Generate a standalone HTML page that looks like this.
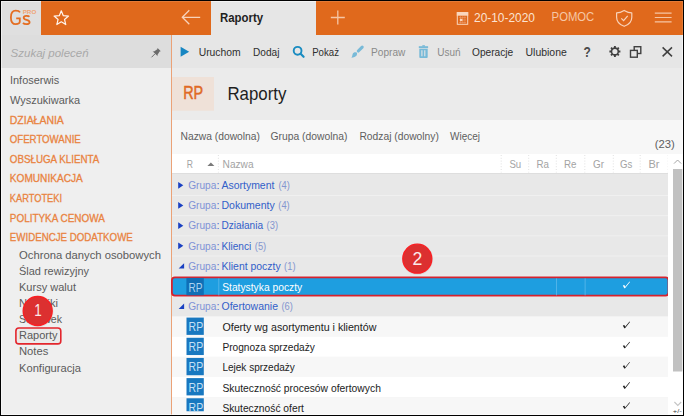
<!DOCTYPE html>
<html><head><meta charset="utf-8"><style>
html,body{margin:0;padding:0;width:684px;height:416px;overflow:hidden;background:#efefef}
svg{display:block}
text{font-family:"Liberation Sans", sans-serif;}
</style></head><body>
<svg width="684" height="416" viewBox="0 0 684 416">
<defs><clipPath id="clipL"><rect x="0" y="0" width="684" height="411.2"/></clipPath></defs>
<rect x="0" y="0" width="684" height="416" fill="#efefef" />
<rect x="0" y="0" width="41" height="35" fill="#dfdfdf" />
<rect x="41" y="0" width="170" height="35" fill="#e0691c" />
<rect x="211" y="0" width="105" height="35" fill="#e6e6e6" />
<rect x="316" y="0" width="368" height="35" fill="#e0691c" />
<path d="M20,12.4 C19.2,11 17.7,10.6 15.7,10.6 C12.7,10.6 10.9,13.1 10.9,17.4 C10.9,21.7 12.7,24.1 15.7,24.1 C17.9,24.1 19.8,23.4 19.8,21.6 L19.8,18.4 L16.2,18.4" fill="none" stroke="#e46e22" stroke-width="1.8"/>
<path d="M29.4,16.7 C28.8,15.8 27.7,15.9 26.3,15.9 C24.6,15.9 23.7,16.6 23.7,17.8 C23.7,20.5 29.6,19.4 29.6,22.3 C29.6,23.6 28.5,24.2 26.4,24.2 C24.9,24.2 23.7,23.8 23,22.9" fill="none" stroke="#e46e22" stroke-width="1.8"/>
<text x="22.7" y="13.5" font-size="5.4" fill="#f0a474" textLength="13.6" lengthAdjust="spacingAndGlyphs" font-weight="700" >PRO</text>
<polygon points="61.30,10.80 63.30,15.65 68.53,16.05 64.53,19.45 65.77,24.55 61.30,21.80 56.83,24.55 58.07,19.45 54.07,16.05 59.30,15.65" fill="none" stroke="#fff5ee" stroke-width="1.2" stroke-linejoin="round"/>
<path d="M182.3,17.3 H200.2 M189.3,10.3 L182.3,17.3 L189.3,24.3" fill="none" stroke="#f8d3ba" stroke-width="1.3"/>
<text x="220" y="22" font-size="12.5" fill="#1e1e1e" textLength="43" lengthAdjust="spacingAndGlyphs" font-weight="700" >Raporty</text>
<path d="M330.8,17.5 H344.8 M337.8,10.5 V24.5" fill="none" stroke="#f5c6a5" stroke-width="1.3"/>
<rect x="457.3" y="12.6" width="10.4" height="11.7" fill="none" stroke="#f9d6bd" stroke-width="1"/>
<rect x="456.8" y="12.1" width="11.4" height="3.6" fill="#f9d6bd" />
<path d="M459,17.5 H466 M459,20 H466 M459,22.5 H466 M460.5,16 V23.5 M462.7,16 V23.5 M464.9,16 V23.5" stroke="#efa276" stroke-width="0.5"/>
<rect x="460" y="18.8" width="2.4" height="2.3" fill="#f9d6bd" />
<text x="474" y="22.4" font-size="12" fill="#fbe3d2" textLength="61" lengthAdjust="spacingAndGlyphs" >20-10-2020</text>
<text x="551.6" y="21.1" font-size="12.3" fill="#f6c7a6" textLength="42.7" lengthAdjust="spacingAndGlyphs" >POMOC</text>
<path d="M624.2,10.4 C621.2,12.2 618.7,12.9 616.6,12.9 L616.6,17.2 C616.6,22 620,24.8 624.2,26.3 C628.4,24.8 631.8,22 631.8,17.2 L631.8,12.9 C629.7,12.9 627.2,12.2 624.2,10.4 Z" fill="none" stroke="#f8d3ba" stroke-width="1.2" stroke-linejoin="round"/>
<path d="M621.3,18.4 L623.6,20.7 L627.7,15.8" fill="none" stroke="#f8d3ba" stroke-width="1.2"/>
<path d="M654.8,13.1 H671.6 M654.8,17.5 H671.6 M654.8,21.9 H671.6" stroke="#f6c5a3" stroke-width="1.2"/>
<rect x="1" y="35" width="170" height="33" fill="#dddddd" />
<text x="10.6" y="57" font-size="11.5" fill="#a9a9a9" textLength="78" lengthAdjust="spacingAndGlyphs" font-style="italic" >Szukaj poleceń</text>
<g fill="#6b6b6b"><path d="M157.6,48 L160.8,51.2 L159.6,51.6 L157.4,54.9 L157.7,56.3 L152.6,51.2 L154,51.5 L157.3,49.3 Z"/><path d="M155,53.8 L151.5,57.3" stroke="#6b6b6b" stroke-width="1"/></g>
<text x="10" y="84.3" font-size="11.2" fill="#5b5b5b" textLength="49.2" lengthAdjust="spacingAndGlyphs" >Infoserwis</text>
<text x="10" y="103.9" font-size="11.2" fill="#5b5b5b" textLength="70" lengthAdjust="spacingAndGlyphs" >Wyszukiwarka</text>
<text x="9.8" y="123.5" font-size="10.6" fill="#e9833f" textLength="54" lengthAdjust="spacingAndGlyphs" stroke="#e9833f" stroke-width="0.3">DZIAŁANIA</text>
<text x="9.8" y="143.1" font-size="10.6" fill="#e9833f" textLength="71" lengthAdjust="spacingAndGlyphs" stroke="#e9833f" stroke-width="0.3">OFERTOWANIE</text>
<text x="9.8" y="162.7" font-size="10.6" fill="#e9833f" textLength="89.5" lengthAdjust="spacingAndGlyphs" stroke="#e9833f" stroke-width="0.3">OBSŁUGA KLIENTA</text>
<text x="9.8" y="182.3" font-size="10.6" fill="#e9833f" textLength="73" lengthAdjust="spacingAndGlyphs" stroke="#e9833f" stroke-width="0.3">KOMUNIKACJA</text>
<text x="9.8" y="201.9" font-size="10.6" fill="#e9833f" textLength="52.3" lengthAdjust="spacingAndGlyphs" stroke="#e9833f" stroke-width="0.3">KARTOTEKI</text>
<text x="9.8" y="221.5" font-size="10.6" fill="#e9833f" textLength="95" lengthAdjust="spacingAndGlyphs" stroke="#e9833f" stroke-width="0.3">POLITYKA CENOWA</text>
<text x="9.8" y="241.1" font-size="10.6" fill="#e9833f" textLength="123" lengthAdjust="spacingAndGlyphs" stroke="#e9833f" stroke-width="0.3">EWIDENCJE DODATKOWE</text>
<text x="19" y="258.8" font-size="11.2" fill="#5b5b5b" textLength="142" lengthAdjust="spacingAndGlyphs" >Ochrona danych osobowych</text>
<text x="19" y="274.9" font-size="11.2" fill="#5b5b5b" textLength="70" lengthAdjust="spacingAndGlyphs" >Ślad rewizyjny</text>
<text x="19" y="291.0" font-size="11.2" fill="#5b5b5b" textLength="57" lengthAdjust="spacingAndGlyphs" >Kursy walut</text>
<text x="19" y="307.1" font-size="11.2" fill="#5b5b5b" textLength="39" lengthAdjust="spacingAndGlyphs" >Naklejki</text>
<text x="19" y="323.2" font-size="11.2" fill="#5b5b5b" textLength="43" lengthAdjust="spacingAndGlyphs" >Schowek</text>
<text x="19" y="339.3" font-size="11.2" fill="#5b5b5b" textLength="38.5" lengthAdjust="spacingAndGlyphs" >Raporty</text>
<text x="19" y="355.4" font-size="11.2" fill="#5b5b5b" textLength="29.3" lengthAdjust="spacingAndGlyphs" >Notes</text>
<text x="19" y="371.5" font-size="11.2" fill="#5b5b5b" textLength="62" lengthAdjust="spacingAndGlyphs" >Konfiguracja</text>
<rect x="171" y="35" width="1" height="381" fill="#eba277" />
<rect x="172" y="35" width="511" height="33" fill="#e6e6e6" />
<path d="M180.6,46.8 L180.6,56.7 L189.2,51.8 Z" fill="#1786c2"/>
<text x="198.7" y="56" font-size="10.9" fill="#2e2e2e" textLength="42" lengthAdjust="spacingAndGlyphs" >Uruchom</text>
<text x="253" y="56" font-size="10.9" fill="#2e2e2e" textLength="26.4" lengthAdjust="spacingAndGlyphs" >Dodaj</text>
<circle cx="297.6" cy="50.8" r="3.9" fill="none" stroke="#1a8cc1" stroke-width="1.9"/>
<path d="M300.6,53.8 L303.6,56.8" stroke="#1a8cc1" stroke-width="2.2" stroke-linecap="round"/>
<text x="312.2" y="56" font-size="10.9" fill="#2e2e2e" textLength="26.8" lengthAdjust="spacingAndGlyphs" >Pokaż</text>
<path d="M362.2,47.1 L358.3,51" stroke="#78bad8" stroke-width="3.1" stroke-linecap="round"/>
<path d="M356.6,52.6 C355.2,51.8 353.2,52.3 352.6,54.2 C352.3,55.5 352,57 351.3,57.8 C353.6,57.6 355.8,56.6 356.6,55.4 C357.2,54.5 357.3,53.2 356.6,52.6 Z" fill="#78bad8"/>
<text x="371.1" y="56" font-size="10.9" fill="#8a8a8a" textLength="34.3" lengthAdjust="spacingAndGlyphs" >Popraw</text>
<g fill="#78bad8"><rect x="418.8" y="46.2" width="9.3" height="1.9"/><rect x="422.3" y="45.2" width="2.6" height="1.4"/><path d="M419.3,48.8 H427.7 V57 Q427.7,57.9 426.8,57.9 H420.2 Q419.3,57.9 419.3,57 Z"/></g>
<path d="M421.9,50.3 V56.3 M424.8,50.3 V56.3" stroke="#e6e6e6" stroke-width="1.1"/>
<text x="437.3" y="56" font-size="10.9" fill="#8a8a8a" textLength="23.3" lengthAdjust="spacingAndGlyphs" >Usuń</text>
<text x="472" y="56" font-size="10.9" fill="#2e2e2e" textLength="41.2" lengthAdjust="spacingAndGlyphs" >Operacje</text>
<text x="525.5" y="56" font-size="10.9" fill="#2e2e2e" textLength="41.3" lengthAdjust="spacingAndGlyphs" >Ulubione</text>
<text x="583.5" y="57.3" font-size="15" fill="#4a4a4a" textLength="7.3" lengthAdjust="spacingAndGlyphs" font-weight="700" >?</text>
<path d="M617.90,51.50 L620.40,51.50 M617.02,53.62 L618.79,55.39 M614.90,54.50 L614.90,57.00 M612.78,53.62 L611.01,55.39 M611.90,51.50 L609.40,51.50 M612.78,49.38 L611.01,47.61 M614.90,48.50 L614.90,46.00 M617.02,49.38 L618.79,47.61" stroke="#404040" stroke-width="1.9"/>
<circle cx="614.9" cy="51.5" r="3.4" fill="#e6e6e6" stroke="#404040" stroke-width="1.6"/>
<rect x="634.2" y="46.7" width="6.6" height="6.8" fill="none" stroke="#404040" stroke-width="1.4"/>
<rect x="630.5" y="50.4" width="6.8" height="6.8" fill="#e6e6e6" stroke="#404040" stroke-width="1.4"/>
<path d="M662.6,47.4 L672,56.4 M672,47.4 L662.6,56.4" stroke="#404040" stroke-width="1.5"/>
<rect x="172" y="68" width="511" height="52" fill="#ebebeb" />
<rect x="172" y="77" width="42" height="33.7" fill="#efe1d8" />
<text x="183.2" y="99.3" font-size="17.8" fill="#e06a24" textLength="20" lengthAdjust="spacingAndGlyphs" stroke="#e06a24" stroke-width="0.5">RP</text>
<text x="227.4" y="99.5" font-size="17.8" fill="#1e1e1e" textLength="59" lengthAdjust="spacingAndGlyphs" >Raporty</text>
<rect x="172" y="120" width="511" height="34" fill="#f7f7f7" />
<text x="180.5" y="140.2" font-size="10.8" fill="#5e5e5e" textLength="79.5" lengthAdjust="spacingAndGlyphs" >Nazwa (dowolna)</text>
<text x="270.5" y="140.2" font-size="10.8" fill="#5e5e5e" textLength="77" lengthAdjust="spacingAndGlyphs" >Grupa (dowolna)</text>
<text x="359.4" y="140.2" font-size="10.8" fill="#5e5e5e" textLength="79.5" lengthAdjust="spacingAndGlyphs" >Rodzaj (dowolny)</text>
<text x="450" y="140.2" font-size="10.8" fill="#5e5e5e" textLength="30" lengthAdjust="spacingAndGlyphs" >Więcej</text>
<text x="654.7" y="147.6" font-size="11.6" fill="#5e5e5e" textLength="20" lengthAdjust="spacingAndGlyphs" >(23)</text>
<rect x="172" y="154" width="511" height="19" fill="#ffffff" />
<rect x="172" y="173" width="496" height="1" fill="#dedede" />
<text x="186.8" y="167.6" font-size="10.6" fill="#a3a3a3" textLength="6.2" lengthAdjust="spacingAndGlyphs" >R</text>
<path d="M207.4,166 L214.4,166 L210.9,162.4 Z" fill="#7a7a7a"/>
<text x="222.6" y="167.6" font-size="10.6" fill="#a3a3a3" textLength="31" lengthAdjust="spacingAndGlyphs" >Nazwa</text>
<text x="509.4" y="167.6" font-size="10.6" fill="#a3a3a3" textLength="11.8" lengthAdjust="spacingAndGlyphs" >Su</text>
<text x="536.4" y="167.6" font-size="10.6" fill="#a3a3a3" textLength="12.5" lengthAdjust="spacingAndGlyphs" >Ra</text>
<text x="564" y="167.6" font-size="10.6" fill="#a3a3a3" textLength="12.5" lengthAdjust="spacingAndGlyphs" >Re</text>
<text x="593" y="167.6" font-size="10.6" fill="#a3a3a3" textLength="11" lengthAdjust="spacingAndGlyphs" >Gr</text>
<text x="620" y="167.6" font-size="10.6" fill="#a3a3a3" textLength="12.3" lengthAdjust="spacingAndGlyphs" >Gs</text>
<text x="648.4" y="167.6" font-size="10.6" fill="#a3a3a3" textLength="11" lengthAdjust="spacingAndGlyphs" >Br</text>
<path d="M218.4,155 V172.5" stroke="#d9d9d9" stroke-width="0.8" stroke-dasharray="1,1.8"/>
<path d="M501.2,155 V172.5" stroke="#d9d9d9" stroke-width="0.8" stroke-dasharray="1,1.8"/>
<path d="M528.7,155 V172.5" stroke="#d9d9d9" stroke-width="0.8" stroke-dasharray="1,1.8"/>
<path d="M556.3,155 V172.5" stroke="#d9d9d9" stroke-width="0.8" stroke-dasharray="1,1.8"/>
<path d="M584.8,155 V172.5" stroke="#d9d9d9" stroke-width="0.8" stroke-dasharray="1,1.8"/>
<path d="M613.3,155 V172.5" stroke="#d9d9d9" stroke-width="0.8" stroke-dasharray="1,1.8"/>
<path d="M640.2,155 V172.5" stroke="#d9d9d9" stroke-width="0.8" stroke-dasharray="1,1.8"/>
<path d="M668.2,155 V172.5" stroke="#d9d9d9" stroke-width="0.8" stroke-dasharray="1,1.8"/>
<rect x="172" y="174" width="496" height="142.49" fill="#e8e8e8" />
<rect x="172" y="194.97" width="496" height="1" fill="rgba(255,255,255,0.35)" />
<rect x="172" y="215.14" width="496" height="1" fill="rgba(255,255,255,0.35)" />
<rect x="172" y="235.31" width="496" height="1" fill="rgba(255,255,255,0.35)" />
<rect x="172" y="255.48" width="496" height="1" fill="rgba(255,255,255,0.35)" />
<rect x="172" y="275.65" width="496" height="1" fill="rgba(255,255,255,0.35)" />
<rect x="172" y="295.82" width="496" height="1" fill="rgba(255,255,255,0.35)" />
<path d="M178.2,181.90 L178.2,188.70 L183.3,185.30 Z" fill="#1a40c2"/>
<text x="188.2" y="189.05" font-size="10.9" fill="#7f92d6" textLength="28.2" lengthAdjust="spacingAndGlyphs" >Grupa</text>
<text x="216.4" y="189.05" font-size="10.9" fill="#4a6ad0">:</text>
<text x="221.5" y="189.05" font-size="10.9" fill="#3260c8" textLength="52.9" lengthAdjust="spacingAndGlyphs" >Asortyment</text>
<text x="278.5" y="189.05" font-size="10.9" fill="#8596cf" textLength="11.4" lengthAdjust="spacingAndGlyphs" >(4)</text>
<path d="M178.2,202.07 L178.2,208.87 L183.3,205.47 Z" fill="#1a40c2"/>
<text x="188.2" y="209.22" font-size="10.9" fill="#7f92d6" textLength="28.2" lengthAdjust="spacingAndGlyphs" >Grupa</text>
<text x="216.4" y="209.22" font-size="10.9" fill="#4a6ad0">:</text>
<text x="221.5" y="209.22" font-size="10.9" fill="#3260c8" textLength="53.3" lengthAdjust="spacingAndGlyphs" >Dokumenty</text>
<text x="278.3" y="209.22" font-size="10.9" fill="#8596cf" textLength="11.4" lengthAdjust="spacingAndGlyphs" >(4)</text>
<path d="M178.2,222.24 L178.2,229.04 L183.3,225.64 Z" fill="#1a40c2"/>
<text x="188.2" y="229.39" font-size="10.9" fill="#7f92d6" textLength="28.2" lengthAdjust="spacingAndGlyphs" >Grupa</text>
<text x="216.4" y="229.39" font-size="10.9" fill="#4a6ad0">:</text>
<text x="221.5" y="229.39" font-size="10.9" fill="#3260c8" textLength="41.5" lengthAdjust="spacingAndGlyphs" >Działania</text>
<text x="266.6" y="229.39" font-size="10.9" fill="#8596cf" textLength="11.4" lengthAdjust="spacingAndGlyphs" >(3)</text>
<path d="M178.2,242.41 L178.2,249.21 L183.3,245.81 Z" fill="#1a40c2"/>
<text x="188.2" y="249.56" font-size="10.9" fill="#7f92d6" textLength="28.2" lengthAdjust="spacingAndGlyphs" >Grupa</text>
<text x="216.4" y="249.56" font-size="10.9" fill="#4a6ad0">:</text>
<text x="221.5" y="249.56" font-size="10.9" fill="#3260c8" textLength="29.8" lengthAdjust="spacingAndGlyphs" >Klienci</text>
<text x="254.8" y="249.56" font-size="10.9" fill="#8596cf" textLength="11.4" lengthAdjust="spacingAndGlyphs" >(5)</text>
<path d="M178.6,268.58 L184.1,268.58 L184.1,263.18 Z" fill="#1a40c2"/>
<text x="188.2" y="269.73" font-size="10.9" fill="#7f92d6" textLength="28.2" lengthAdjust="spacingAndGlyphs" >Grupa</text>
<text x="216.4" y="269.73" font-size="10.9" fill="#4a6ad0">:</text>
<text x="221.5" y="269.73" font-size="10.9" fill="#3260c8" textLength="59.1" lengthAdjust="spacingAndGlyphs" >Klient poczty</text>
<text x="284.1" y="269.73" font-size="10.9" fill="#8596cf" textLength="11.4" lengthAdjust="spacingAndGlyphs" >(1)</text>
<rect x="171.9" y="277.4" width="496.6" height="18.2" rx="3" fill="#1e9ee0" stroke="#d5232e" stroke-width="1.8"/>
<rect x="186.4" y="277.9" width="17.4" height="17.4" fill="#106fb6" />
<text x="188.6" y="291.5" font-size="12.8" fill="#a9d2f0" textLength="14" lengthAdjust="spacingAndGlyphs" >RP</text>
<rect x="218.4" y="278.4" width="0.8" height="17" fill="#5cb8ea"/>
<rect x="556.2" y="278.4" width="0.8" height="17" fill="#5cb8ea"/>
<rect x="584.7" y="278.4" width="0.8" height="17" fill="#5cb8ea"/>
<text x="222.2" y="291.2" font-size="10.9" fill="#ffffff" textLength="80" lengthAdjust="spacingAndGlyphs" >Statystyka poczty</text>
<path d="M622.8000000000001,285.59999999999997 L624.4,285.0 L625.2,286.8 L629.5,281.59999999999997 L630.0,282.0 L625.0,288.2 L624.3000000000001,288.2 Z" fill="#ffffff"/>
<path d="M178.6,308.92 L184.1,308.92 L184.1,303.52 Z" fill="#1a40c2"/>
<text x="188.2" y="310.07" font-size="10.9" fill="#7f92d6" textLength="28.2" lengthAdjust="spacingAndGlyphs" >Grupa</text>
<text x="216.4" y="310.07" font-size="10.9" fill="#4a6ad0">:</text>
<text x="221.5" y="310.07" font-size="10.9" fill="#3260c8" textLength="56.5" lengthAdjust="spacingAndGlyphs" >Ofertowanie</text>
<text x="281.5" y="310.07" font-size="10.9" fill="#8596cf" textLength="11.4" lengthAdjust="spacingAndGlyphs" >(6)</text>
<rect x="172" y="316.49" width="496" height="20.220000000000002" fill="#f7f7f7" />
<rect x="186.5" y="317.59" width="17.3" height="17.3" fill="#1878c0" />
<text x="188.6" y="331.09" font-size="12.8" fill="#c6e0f5" textLength="14.6" lengthAdjust="spacingAndGlyphs" >RP</text>
<text x="222.4" y="331.09" font-size="10.9" fill="#222222" textLength="154" lengthAdjust="spacingAndGlyphs" >Oferty wg asortymentu i klientów</text>
<path d="M622.8000000000001,325.59 L624.4,324.99 L625.2,326.79 L629.5,321.59 L630.0,321.99 L625.0,328.19 L624.3000000000001,328.19 Z" fill="#1e1e1e"/>
<rect x="172" y="336.66" width="496" height="20.220000000000002" fill="#ffffff" />
<rect x="186.5" y="337.76" width="17.3" height="17.3" fill="#1878c0" />
<text x="188.6" y="351.26" font-size="12.8" fill="#c6e0f5" textLength="14.6" lengthAdjust="spacingAndGlyphs" >RP</text>
<text x="222.4" y="351.26" font-size="10.9" fill="#222222" textLength="92.5" lengthAdjust="spacingAndGlyphs" >Prognoza sprzedaży</text>
<path d="M622.8000000000001,345.76 L624.4,345.16 L625.2,346.96000000000004 L629.5,341.76 L630.0,342.16 L625.0,348.36 L624.3000000000001,348.36 Z" fill="#1e1e1e"/>
<rect x="172" y="356.83" width="496" height="20.220000000000002" fill="#f7f7f7" />
<rect x="186.5" y="357.93" width="17.3" height="17.3" fill="#1878c0" />
<text x="188.6" y="371.43" font-size="12.8" fill="#c6e0f5" textLength="14.6" lengthAdjust="spacingAndGlyphs" >RP</text>
<text x="222.4" y="371.43" font-size="10.9" fill="#222222" textLength="72.5" lengthAdjust="spacingAndGlyphs" >Lejek sprzedaży</text>
<path d="M622.8000000000001,365.92999999999995 L624.4,365.33 L625.2,367.13 L629.5,361.92999999999995 L630.0,362.33 L625.0,368.53 L624.3000000000001,368.53 Z" fill="#1e1e1e"/>
<rect x="172" y="377.0" width="496" height="20.220000000000002" fill="#ffffff" />
<rect x="186.5" y="378.1" width="17.3" height="17.3" fill="#1878c0" />
<text x="188.6" y="391.6" font-size="12.8" fill="#c6e0f5" textLength="14.6" lengthAdjust="spacingAndGlyphs" >RP</text>
<text x="222.4" y="391.6" font-size="10.9" fill="#222222" textLength="158.5" lengthAdjust="spacingAndGlyphs" >Skuteczność procesów ofertowych</text>
<path d="M622.8000000000001,386.09999999999997 L624.4,385.5 L625.2,387.3 L629.5,382.09999999999997 L630.0,382.5 L625.0,388.7 L624.3000000000001,388.7 Z" fill="#1e1e1e"/>
<rect x="172" y="397.17" width="496" height="20.220000000000002" fill="#f7f7f7" />
<g clip-path="url(#clipL)">
<rect x="186.5" y="398.27" width="17.3" height="17.3" fill="#1878c0" />
<text x="188.6" y="411.77" font-size="12.8" fill="#c6e0f5" textLength="14.6" lengthAdjust="spacingAndGlyphs" >RP</text>
</g>
<text x="222.4" y="411.77" font-size="10.9" fill="#222222" textLength="81.5" lengthAdjust="spacingAndGlyphs" >Skuteczność ofert</text>
<path d="M622.8000000000001,406.27 L624.4,405.67 L625.2,407.47 L629.5,402.27 L630.0,402.67 L625.0,408.87 L624.3000000000001,408.87 Z" fill="#1e1e1e"/>
<rect x="668" y="154" width="15" height="262" fill="#ffffff" />
<rect x="673" y="169" width="9.3" height="202.5" fill="#c1c1c1" />
<path d="M674,163.6 L677.6,160 L681.2,163.6" fill="none" stroke="#9a9a9a" stroke-width="0.9"/>
<path d="M674.4,402 L677.8,405.4 L681.2,402" fill="none" stroke="#c4c4c4" stroke-width="1.1"/>
<text x="672.8" y="412.5" font-size="5.5" fill="#404040" textLength="9" lengthAdjust="spacingAndGlyphs" >+/-</text>
<rect x="15.9" y="328" width="44.9" height="15.9" rx="3" fill="rgba(0,0,0,0.02)" stroke="#e3262d" stroke-width="1.6"/>
<circle cx="37.9" cy="311.4" r="15.6" fill="rgba(0,0,0,0.07)"/>
<circle cx="37.7" cy="311" r="14.5" fill="#dc3030" stroke="#fb1e22" stroke-width="1.3"/>
<text x="34.3" y="316.2" font-size="17" fill="#fbeaea" textLength="7.5" lengthAdjust="spacingAndGlyphs" >1</text>
<circle cx="417.5" cy="259.1" r="15.6" fill="rgba(0,0,0,0.07)"/>
<circle cx="417.3" cy="258.7" r="14.5" fill="#dc3030" stroke="#fb1e22" stroke-width="1.3"/>
<text x="412.4" y="264.7" font-size="17.8" fill="#fbeaea" textLength="9.8" lengthAdjust="spacingAndGlyphs" >2</text>
<rect x="1" y="1" width="40" height="1" fill="rgba(255,255,255,0.5)" />
<rect x="41" y="1" width="170" height="1" fill="rgba(255,255,255,0.12)" />
<rect x="211" y="1" width="105" height="1" fill="rgba(255,255,255,0.5)" />
<rect x="316" y="1" width="367" height="1" fill="rgba(255,255,255,0.12)" />
<rect x="1" y="2" width="1" height="413" fill="rgba(255,255,255,0.5)" />
<rect x="682" y="2" width="1" height="33" fill="rgba(255,255,255,0.12)" />
<rect x="682" y="35" width="1" height="134" fill="rgba(255,255,255,0.5)" />
<rect x="682" y="371.5" width="1" height="43.5" fill="rgba(255,255,255,0.5)" />
<rect x="2" y="414" width="680" height="1" fill="rgba(255,255,255,0.5)" />
<rect x="0.5" y="0.5" width="683" height="415" fill="none" stroke="#000" stroke-width="1"/>
</svg>
</body></html>
